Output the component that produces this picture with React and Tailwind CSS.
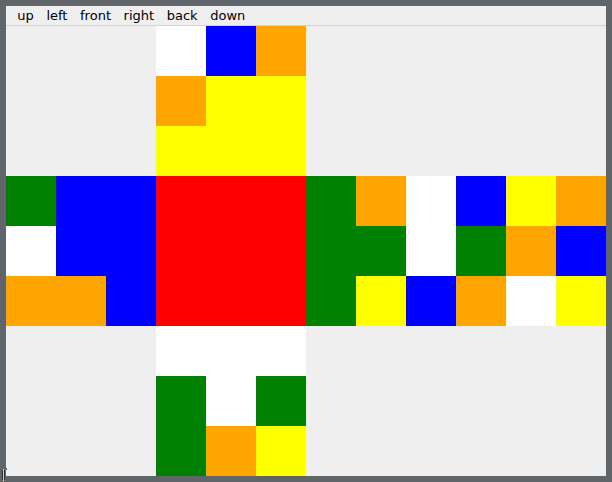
import React from 'react';

const COLORS = {
  W: 'bg-white',
  B: 'bg-[#0000ff]',
  O: 'bg-[#ffa500]',
  Y: 'bg-[#ffff00]',
  G: 'bg-[#008000]',
  R: 'bg-[#ff0000]',
  _: 'bg-transparent',
};

// 12 columns x 9 rows, cube net
const NET = [
  '___WBO______',
  '___OYY______',
  '___YYY______',
  'GBBRRRGOWBYO',
  'WBBRRRGGWGOB',
  'OOBRRRGYBOWY',
  '___WWW______',
  '___GWG______',
  '___GOY______',
];

const MENU = ['up', 'left', 'front', 'right', 'back', 'down'];

const App = () => {
  return (
    <div className="relative w-[612px] h-[482px] bg-[#5f6568] p-[6px] overflow-hidden">
      <div className="flex flex-col w-full h-full bg-[#efefef]">
        <div className="flex items-center h-[20px] pl-[5px] pb-[1px] border-b border-[#d4d4d4] font-['DejaVu_Sans',sans-serif] text-[13px] text-black">
          {MENU.map((m) => (
            <span key={m} className="px-[6.3px] leading-none">
              {m}
            </span>
          ))}
        </div>
        <div className="grid grid-cols-[repeat(12,50px)] grid-rows-[repeat(9,50px)]">
          {NET.map((row, r) =>
            row.split('').map((c, i) => (
              <div key={`${r}-${i}`} className={COLORS[c]} />
            ))
          )}
        </div>
      </div>
      <svg className="absolute left-0 top-[468px]" width="8" height="14" viewBox="0 0 8 14">
        <path d="M0 1h7M3.5 1v12M0 13h7" stroke="#000" strokeWidth="2" fill="none" />
        <path d="M0 1h7M3.5 1v12M0 13h7" stroke="#fff" strokeWidth="0.8" fill="none" />
      </svg>
    </div>
  );
};

export default App;
